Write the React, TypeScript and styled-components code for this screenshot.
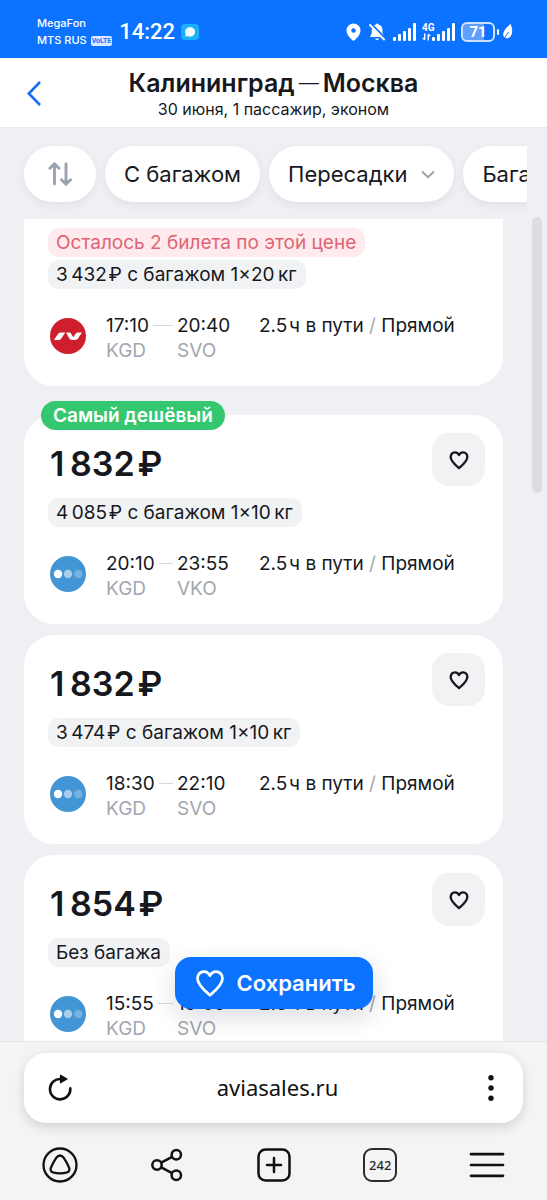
import React from "react";
import styled, { createGlobalStyle, css } from "styled-components";

const color = {
  blue: "#0b73ff",
  page: "#eff0f4",
  ink: "#16181d",
  muted: "#a3a7af",
  white: "#ffffff",
};

const GlobalStyle = createGlobalStyle`
  * { box-sizing: border-box; }
  html, body { margin: 0; padding: 0; }
  body {
    background: ${color.page};
    color: ${color.ink};
    font-family: Inter, "Liberation Sans", sans-serif;
  }
  button { font: inherit; color: inherit; border: 0; padding: 0; background: none; cursor: pointer; }
  a { color: inherit; text-decoration: none; }
  svg { display: block; flex: none; }
`;

const Screen = styled.div`
  display: flex;
  flex-direction: column;
  height: 100vh;
  overflow: hidden;
`;

/* ---------- status bar ---------- */

const StatusBar = styled.div`
  display: flex;
  align-items: center;
  justify-content: space-between;
  height: 58px;
  padding: 6px 33px 0 37px;
  background: ${color.blue};
  color: ${color.white};
  font-family: Roboto, "Liberation Sans", sans-serif;
`;

const StatusGroup = styled.div<{ $gap: number }>`
  display: flex;
  align-items: center;
  gap: ${(p) => p.$gap}px;
`;

const Carriers = styled.div`
  display: flex;
  flex-direction: column;
  font-family: Inter, sans-serif;
  font-size: 11px;
  font-weight: 500;
  line-height: 17px;
`;

const CarrierLine = styled.div`
  display: flex;
  align-items: center;
  gap: 4px;
`;

const Volte = styled.span`
  padding: 0 1px;
  border-radius: 2px;
  background: #dbe9ff;
  color: ${color.blue};
  font-family: Roboto, sans-serif;
  font-size: 7px;
  font-weight: 700;
  line-height: 10px;
`;

const Clock = styled.time`
  font-size: 22px;
  font-weight: 500;
  line-height: 28px;
`;

const Messenger = styled.span`
  display: grid;
  place-items: center;
  width: 18px;
  height: 16px;
  border-radius: 4px;
  background: #1cb0fb;
`;

const Network = styled.span`
  display: flex;
  align-items: flex-end;
`;

const NetworkLabel = styled.span`
  display: flex;
  flex-direction: column;
  align-items: flex-start;
  width: 10px;
  font-size: 10px;
  font-weight: 700;
  line-height: 10px;
`;

const Battery = styled.span`
  display: grid;
  place-items: center;
  width: 34px;
  height: 20px;
  border: 2px solid #cfe2ff;
  border-radius: 6px;
  background: linear-gradient(90deg, #5e9ffb 71%, ${color.blue} 71%);
  font-size: 15px;
  font-weight: 700;
  line-height: 16px;
`;

const BatteryTip = styled.span`
  width: 2px;
  height: 6px;
  border-radius: 1px;
  background: ${color.white};
`;

function Bars() {
  return (
    <svg width="23" height="18" viewBox="0 0 23 18" fill="#fff">
      <rect x="0" y="14" width="3" height="4" rx="1" />
      <rect x="5" y="11" width="3" height="7" rx="1" />
      <rect x="10" y="8" width="3" height="10" rx="1" />
      <rect x="15" y="5" width="3" height="13" rx="1" />
      <rect x="20" y="0" width="3" height="18" rx="1" />
    </svg>
  );
}

function Status() {
  return (
    <StatusBar>
      <StatusGroup $gap={7}>
        <Carriers>
          <span>MegaFon</span>
          <CarrierLine>
            MTS RUS <Volte>VoLTE</Volte>
          </CarrierLine>
        </Carriers>
        <StatusGroup $gap={6}>
          <Clock>14:22</Clock>
          <Messenger>
            <svg width="12" height="12" viewBox="0 0 12 12">
              <path d="M6 1a5 4.8 0 1 1-2.2 9.1L1.4 10.8 1.8 8.4A5 4.8 0 0 1 6 1Z" fill="#f2fbff" />
            </svg>
          </Messenger>
        </StatusGroup>
      </StatusGroup>
      <StatusGroup $gap={8}>
        <svg width="15" height="19" viewBox="0 0 15 19">
          <path
            fillRule="evenodd"
            fill="#fff"
            d="M7.500 0.500A7 7 0 0 0 .5 7.500c0 4.500 4.500 8.500 7 10.500 2.500-2 7-6 7-10.500A7 7 0 0 0 7.500.5Zm0 4.700a2.300 2.300 0 1 1 0 4.600 2.300 2.300 0 0 1 0-4.600Z"
          />
        </svg>
        <svg width="16" height="18" viewBox="0 0 16 18">
          <path d="M4.500 2.800C5.200 2 6 1.700 6.900 1.500 7.200.3 9.200.3 9.500 1.500 12 2.100 13.500 4 13.500 7v3l2 4H1l1.800-4V6Z" fill="#fff" />
          <path d="M6.200 15.500h4c-.5 2-3.500 2-4 0Z" fill="#fff" />
          <path d="M1.800.4 16 15" stroke={color.blue} strokeWidth="2" />
          <path d="M1 2 15 16.500" stroke="#fff" strokeWidth="1.900" strokeLinecap="round" />
        </svg>
        <StatusGroup $gap={6}>
          <Bars />
          <Network>
            <NetworkLabel>
              4G
              <svg width="9" height="8" viewBox="0 0 10 8" fill="none" stroke="#fff" strokeWidth="1.600">
                <path d="M3 0v7M1 5l2 2M7 8V1M7 1l2 2" />
              </svg>
            </NetworkLabel>
            <Bars />
          </Network>
          <StatusGroup $gap={2}>
            <Battery>71</Battery>
            <BatteryTip />
            <svg width="13" height="18" viewBox="0 0 13 18">
              <path d="M9.500 1c2 4 2.300 9 .3 12-1.800 2.600-4.800 2.600-6.500 1.200C.8 11.500 2.500 6.500 9.500 1Z" fill="#fff" />
              <path d="M7.500 9 4.800 13 3 16.500" stroke={color.blue} strokeWidth="1" fill="none" />
            </svg>
          </StatusGroup>
        </StatusGroup>
      </StatusGroup>
    </StatusBar>
  );
}

/* ---------- route header ---------- */

const Header = styled.header`
  display: grid;
  grid-template-columns: 36px 1fr 36px;
  align-items: center;
  height: 70px;
  padding: 2px 16px 0;
  background: ${color.white};
  border-bottom: 1px solid #e9eaed;
`;

const BackButton = styled.button`
  display: grid;
  place-items: center;
  height: 40px;
`;

const Route = styled.div`
  text-align: center;
`;

const Title = styled.h1`
  display: flex;
  justify-content: center;
  align-items: center;
  gap: 4px;
  margin: 0;
  font-size: 25px;
  font-weight: 600;
  line-height: 30px;
`;

const TitleDash = styled.span`
  font-size: 20px;
  font-weight: 300;
`;

const Subtitle = styled.p`
  margin: 0;
  font-size: 16px;
  line-height: 22px;
`;

/* ---------- filters ---------- */

const Filters = styled.div`
  display: flex;
  gap: 9px;
  flex: none;
  margin-right: 20px;
  padding: 18px 0 17px 24px;
  overflow: hidden;
`;

const Chip = styled.button<{ $icon?: boolean }>`
  display: flex;
  align-items: center;
  justify-content: center;
  gap: 14px;
  flex: none;
  height: 56px;
  padding: 0 19px;
  border-radius: 28px;
  background: ${color.white};
  box-shadow: 0 3px 8px rgba(40, 50, 80, 0.08);
  font-size: 22px;
  line-height: 28px;
  ${(p) =>
    p.$icon &&
    css`
      width: 72px;
    `}
`;

/* ---------- ticket list ---------- */

const Results = styled.main`
  position: relative;
  flex: 1;
  min-height: 0;
`;

const List = styled.div`
  display: flex;
  flex-direction: column;
  gap: 11px;
  height: 100%;
  padding: 0 44px 0 24px;
  overflow: hidden;
`;

const ScrollThumb = styled.div`
  position: absolute;
  top: -2px;
  right: 5px;
  width: 10px;
  height: 276px;
  border-radius: 5px;
  background: #dcdde3;
`;

const Card = styled.article<{ $cut?: boolean }>`
  position: relative;
  flex: none;
  padding: ${(p) => (p.$cut ? "9px 18px 23px 24px" : "18px 18px 23px 24px")};
  border-radius: ${(p) => (p.$cut ? "0 0 30px 30px" : "30px")};
  background: ${color.white};
  ${(p) =>
    p.$cut &&
    css`
      margin-bottom: 18px;
    `}
`;

const Ribbon = styled.span`
  position: absolute;
  top: -14px;
  left: 17px;
  padding: 0 12px;
  border-radius: 15px;
  background: #35c76f;
  color: ${color.white};
  font-size: 19px;
  font-weight: 600;
  line-height: 29px;
`;

const PriceRow = styled.div`
  display: flex;
  align-items: flex-end;
  justify-content: space-between;
  margin-bottom: 12px;
`;

const Price = styled.h2`
  margin: 0;
  padding-left: 2px;
  font-size: 34px;
  font-weight: 600;
  line-height: 44px;
`;

const LikeButton = styled.button`
  display: grid;
  place-items: center;
  width: 53px;
  height: 53px;
  border-radius: 17px;
  background: #f1f2f4;
`;

const Tags = styled.div`
  display: flex;
  flex-direction: column;
  align-items: flex-start;
  gap: 3px;
`;

const Tag = styled.span<{ $alert?: boolean }>`
  padding: 0 9px 0 8px;
  border-radius: 11px;
  background: ${(p) => (p.$alert ? "#ffebed" : "#f1f2f4")};
  color: ${(p) => (p.$alert ? "#dd6574" : color.ink)};
  font-size: 19px;
  line-height: 29px;
`;

const Flight = styled.div`
  display: grid;
  grid-template-columns: 58px 71px 82px 1fr;
  margin-top: 24px;
  font-size: 19px;
  line-height: 25px;
`;

const LogoCell = styled.div`
  padding: 5px 0 0 2px;
`;

const Departure = styled.div`
  display: flex;
  align-items: center;
`;

const Connector = styled.span`
  flex: 1;
  height: 1px;
  margin: 0 4px;
  background: #d5d8dd;
`;

const Code = styled.div`
  color: ${color.muted};
`;

const Slash = styled.span`
  color: ${color.muted};
`;

const SaveButton = styled.button`
  position: absolute;
  bottom: 32px;
  left: 50%;
  transform: translateX(-50%);
  display: flex;
  align-items: center;
  gap: 12px;
  height: 52px;
  padding: 0 17px 0 20px;
  border-radius: 16px;
  background: ${color.blue};
  color: ${color.white};
  box-shadow: 0 8px 24px rgba(30, 40, 70, 0.16);
  font-size: 22px;
  font-weight: 600;
`;

function HeartIcon({ size, width }: { size: number; width: number }) {
  return (
    <svg width={size} height={size} viewBox="0 0 24 24" fill="none" stroke="currentColor" strokeWidth={width} strokeLinejoin="round">
      <path d="M12 21.800C8.500 18.800 2 13.600 2 8.400 2 5.200 4.300 2.800 7.100 2.800c2.100 0 3.900 1.200 4.900 3.300 1-2.100 2.800-3.300 4.900-3.300C19.700 2.800 22 5.200 22 8.400c0 5.200-6.500 10.400-10 13.400Z" />
    </svg>
  );
}

function NordwindLogo() {
  return (
    <svg width="36" height="36" viewBox="0 0 36 36">
      <circle cx="18" cy="18" r="18" fill="#cf1f2d" />
      <path d="M4 22 7.800 16.300C8.600 15.100 9.500 14.600 11 14.600h4.300L11.500 20.300C10.700 21.500 9.800 22 8.300 22Z" fill="#fff" />
      <path d="M16 14.600h4.300L23.300 19.200 25.200 16.300C26 15.100 26.900 14.600 28.400 14.600H32L28.200 20.300C27.400 21.500 26.500 22 25 22H22.300C20.800 22 20 21.500 19.200 20.300Z" fill="#fff" />
    </svg>
  );
}

function PobedaLogo() {
  return (
    <svg width="36" height="36" viewBox="0 0 36 36">
      <circle cx="18" cy="18" r="18" fill="#4396d6" />
      <circle cx="8" cy="18" r="4.200" fill="#fff" />
      <circle cx="18" cy="18" r="4.200" fill="#a8ccec" />
      <circle cx="28.300" cy="18" r="4.200" fill="#75b0df" />
    </svg>
  );
}

type Ticket = {
  price?: string;
  ribbon?: string;
  alert?: string;
  baggage: string;
  airline: "nordwind" | "pobeda";
  depart: string;
  arrive: string;
  to: string;
};

const tickets: Ticket[] = [
  {
    alert: "Осталось 2 билета по этой цене",
    baggage: "3\u2009432\u200a₽ с багажом 1×20\u2009кг",
    airline: "nordwind",
    depart: "17:10",
    arrive: "20:40",
    to: "SVO",
  },
  {
    price: "1\u2009832\u200a₽",
    ribbon: "Самый дешёвый",
    baggage: "4\u2009085\u200a₽ с багажом 1×10\u2009кг",
    airline: "pobeda",
    depart: "20:10",
    arrive: "23:55",
    to: "VKO",
  },
  {
    price: "1\u2009832\u200a₽",
    baggage: "3\u2009474\u200a₽ с багажом 1×10\u2009кг",
    airline: "pobeda",
    depart: "18:30",
    arrive: "22:10",
    to: "SVO",
  },
  {
    price: "1\u2009854\u200a₽",
    baggage: "Без багажа",
    airline: "pobeda",
    depart: "15:55",
    arrive: "19:35",
    to: "SVO",
  },
];

function TicketCard({ ticket }: { ticket: Ticket }) {
  return (
    <Card $cut={!ticket.price}>
      {ticket.ribbon && <Ribbon>{ticket.ribbon}</Ribbon>}
      {ticket.price && (
        <PriceRow>
          <Price>{ticket.price}</Price>
          <LikeButton aria-label="В избранное">
            <HeartIcon size={20} width={2.800} />
          </LikeButton>
        </PriceRow>
      )}
      <Tags>
        {ticket.alert && <Tag $alert>{ticket.alert}</Tag>}
        <Tag>{ticket.baggage}</Tag>
      </Tags>
      <Flight>
        <LogoCell>{ticket.airline === "nordwind" ? <NordwindLogo /> : <PobedaLogo />}</LogoCell>
        <div>
          <Departure>
            {ticket.depart}
            <Connector />
          </Departure>
          <Code>KGD</Code>
        </div>
        <div>
          <div>{ticket.arrive}</div>
          <Code>{ticket.to}</Code>
        </div>
        <div>
          2.5{"\u200a"}ч в пути <Slash>/</Slash> Прямой
        </div>
      </Flight>
    </Card>
  );
}

/* ---------- browser controls ---------- */

const BrowserPanel = styled.footer`
  flex: none;
  padding: 11px 24px 17px;
  background: #f4f4f4;
  border-top: 1px solid #e6e6e8;
`;

const AddressBar = styled.div`
  display: flex;
  align-items: center;
  justify-content: space-between;
  height: 70px;
  padding: 0 18px;
  border-radius: 22px;
  background: ${color.white};
  box-shadow: 0 4px 12px rgba(0, 0, 0, 0.14);
  color: #111;
`;

const Address = styled.a`
  padding-bottom: 3px;
  font-family: "Noto Sans", sans-serif;
  font-size: 22px;
  line-height: 30px;
`;

const Toolbar = styled.nav`
  display: flex;
  justify-content: space-between;
  margin-top: 24px;
  padding: 0 18px;
  color: #111;
`;

const ToolButton = styled.button<{ $narrow?: boolean }>`
  display: grid;
  place-items: center;
  width: ${(p) => (p.$narrow ? 28 : 36)}px;
  height: 36px;
`;

const TabCount = styled.span`
  display: grid;
  place-items: center;
  width: 34px;
  height: 34px;
  border: 2px solid #2b2b2b;
  border-radius: 9px;
  color: #2b2b2b;
  font-family: "Noto Sans", sans-serif;
  font-size: 13px;
  font-weight: 500;
  line-height: 16px;
`;

export default function App() {
  return (
    <>
      <GlobalStyle />
      <Screen>
        <Status />
        <Header>
          <BackButton aria-label="Назад">
            <svg width="16" height="27" viewBox="0 0 16 27" fill="none" stroke="#1a6df0" strokeWidth="2.600">
              <path d="M14 2 2.800 13.500 14 25" />
            </svg>
          </BackButton>
          <Route>
            <Title>
              Калининград<TitleDash>—</TitleDash>Москва
            </Title>
            <Subtitle>30 июня, 1 пассажир, эконом</Subtitle>
          </Route>
        </Header>
        <Filters>
          <Chip $icon aria-label="Сортировка">
            <svg width="24" height="24" viewBox="0 0 24 24" fill="none" stroke="#9aa3ad" strokeWidth="2.900" strokeLinecap="round" strokeLinejoin="round">
              <path d="M6.500 22V2M2 6.300 6.500 1.800 11 6.300" />
              <path d="M18 2v20M13.500 17.700 18 22.200l4.500-4.500" />
            </svg>
          </Chip>
          <Chip>С багажом</Chip>
          <Chip>
            Пересадки
            <svg width="14" height="9" viewBox="0 0 14 9" fill="none" stroke="#9aa3ad" strokeWidth="2">
              <path d="M1 1.500 7 7.200 13 1.500" />
            </svg>
          </Chip>
          <Chip>Багаж</Chip>
        </Filters>
        <Results>
          <List>
            {tickets.map((ticket, i) => (
              <TicketCard key={i} ticket={ticket} />
            ))}
          </List>
          <ScrollThumb />
          <SaveButton>
            <HeartIcon size={30} width={2.200} />
            Сохранить
          </SaveButton>
        </Results>
        <BrowserPanel>
          <AddressBar>
            <ToolButton aria-label="Обновить">
              <svg width="28" height="28" viewBox="0 0 28 28" fill="none" stroke="currentColor" strokeWidth="2.600">
                <path d="M24.300 14.300A10.200 10.200 0 1 1 15 5" strokeLinecap="round" />
                <path d="M14.500 1.200v7.600L21 5Z" fill="currentColor" strokeWidth="1.200" strokeLinejoin="round" />
              </svg>
            </ToolButton>
            <Address href="#">aviasales.ru</Address>
            <ToolButton $narrow aria-label="Меню страницы">
              <svg width="6" height="28" viewBox="0 0 6 28" fill="currentColor">
                <circle cx="3" cy="3.700" r="2.700" />
                <circle cx="3" cy="14" r="2.700" />
                <circle cx="3" cy="24.300" r="2.700" />
              </svg>
            </ToolButton>
          </AddressBar>
          <Toolbar>
            <ToolButton aria-label="Алиса">
              <svg width="36" height="36" viewBox="0 0 36 36" fill="none" stroke="currentColor" strokeWidth="2.300">
                <circle cx="18" cy="18" r="16.500" />
                <path d="M18 8.500c1.500 0 2.500.6 3.600 2.200 2 2.900 3.800 6.200 5.400 9.700.9 2.200.4 4.200-1.900 5-4.300 1.200-9.900 1.200-14.200 0-2.300-.8-2.800-2.800-1.900-5 1.600-3.500 3.400-6.800 5.400-9.700C15.500 9.100 16.500 8.500 18 8.500Z" />
              </svg>
            </ToolButton>
            <ToolButton aria-label="Поделиться">
              <svg width="34" height="34" viewBox="0 0 34 34" fill="none" stroke="currentColor" strokeWidth="2.500">
                <circle cx="7" cy="17" r="4.700" />
                <circle cx="26.300" cy="6.700" r="4.700" />
                <circle cx="26.300" cy="27.300" r="4.700" />
                <path d="M11.200 14.700 22.100 8.900M11.200 19.300 22.100 25.100" />
              </svg>
            </ToolButton>
            <ToolButton aria-label="Новая вкладка">
              <svg width="34" height="34" viewBox="0 0 34 34" fill="none" stroke="currentColor" strokeWidth="2.500">
                <rect x="1.500" y="1.500" width="31" height="31" rx="7" />
                <path d="M17 10v14M10 17h14" strokeLinecap="round" />
              </svg>
            </ToolButton>
            <ToolButton aria-label="Вкладки">
              <TabCount>242</TabCount>
            </ToolButton>
            <ToolButton aria-label="Меню">
              <svg width="36" height="26" viewBox="0 0 36 26" fill="none" stroke="currentColor" strokeWidth="2.700" strokeLinecap="round">
                <path d="M2 2.200h32M2 13h32M2 23.800h32" />
              </svg>
            </ToolButton>
          </Toolbar>
        </BrowserPanel>
      </Screen>
    </>
  );
}
